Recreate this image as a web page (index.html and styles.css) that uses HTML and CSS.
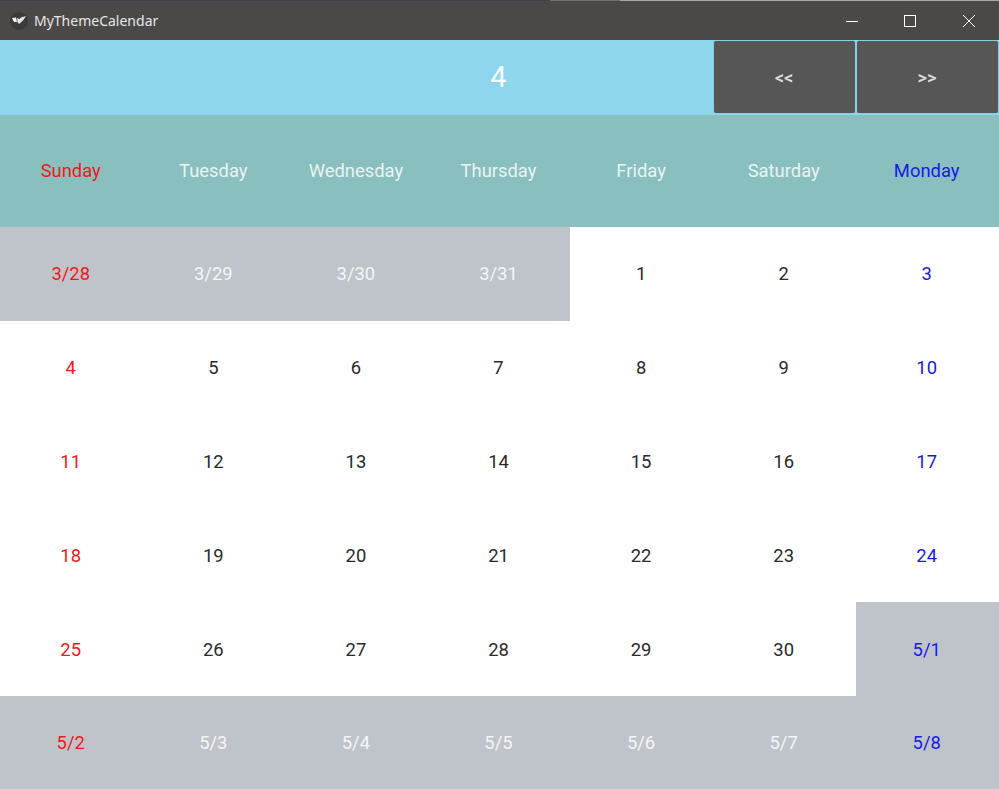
FILE: index.html

```html
<!DOCTYPE html>
<html lang="en">
<head>
    <meta charset="UTF-8">
    <meta name="viewport" content="width=device-width, initial-scale=1.0">
    <title>MyThemeCalendar</title>
    <link rel="stylesheet" href="styles.css">
</head>
<body>
    <!-- window title bar -->
    <div class="titlebar">
        <div class="app-icon">
            <svg width="14" height="9" viewBox="0 0 14 9">
                <path d="M0 2 L4 1.5 L5 6 L2 6 Z" fill="#f2f2f2"/>
                <path d="M5 2 L7.5 3 L9 1.5 L14 0 L11 4.5 L7 8 L5.5 6 Z" fill="#e4e4e4"/>
            </svg>
        </div>
        <div class="app-name">MyThemeCalendar</div>
        <div class="win-btn">
            <svg width="12" height="12" viewBox="0 0 12 12"><path d="M0 6.5H12" stroke="#fff" fill="none"/></svg>
        </div>
        <div class="win-btn">
            <svg width="12" height="12" viewBox="0 0 12 12"><rect x="0.5" y="0.5" width="11" height="11" stroke="#fff" fill="none"/></svg>
        </div>
        <div class="win-btn">
            <svg width="12" height="12" viewBox="0 0 12 12"><path d="M0 0L12 12M12 0L0 12" stroke="#fff" fill="none"/></svg>
        </div>
    </div>

    <div class="month-bar">
        <div class="month">4</div>
        <button class="nav-btn">&lt;&lt;</button>
        <button class="nav-btn">&gt;&gt;</button>
    </div>

    <div class="week">
        <div class="cell sun">Sunday</div>
        <div class="cell">Tuesday</div>
        <div class="cell">Wednesday</div>
        <div class="cell">Thursday</div>
        <div class="cell">Friday</div>
        <div class="cell">Saturday</div>
        <div class="cell mon">Monday</div>
    </div>

    <div class="days">
        <div class="cell sun other">3/28</div>
        <div class="cell other">3/29</div>
        <div class="cell other">3/30</div>
        <div class="cell other">3/31</div>
        <div class="cell">1</div>
        <div class="cell">2</div>
        <div class="cell mon">3</div>

        <div class="cell sun">4</div>
        <div class="cell">5</div>
        <div class="cell">6</div>
        <div class="cell">7</div>
        <div class="cell">8</div>
        <div class="cell">9</div>
        <div class="cell mon">10</div>

        <div class="cell sun">11</div>
        <div class="cell">12</div>
        <div class="cell">13</div>
        <div class="cell">14</div>
        <div class="cell">15</div>
        <div class="cell">16</div>
        <div class="cell mon">17</div>

        <div class="cell sun">18</div>
        <div class="cell">19</div>
        <div class="cell">20</div>
        <div class="cell">21</div>
        <div class="cell">22</div>
        <div class="cell">23</div>
        <div class="cell mon">24</div>

        <div class="cell sun">25</div>
        <div class="cell">26</div>
        <div class="cell">27</div>
        <div class="cell">28</div>
        <div class="cell">29</div>
        <div class="cell">30</div>
        <div class="cell mon other">5/1</div>

        <div class="cell sun other">5/2</div>
        <div class="cell other">5/3</div>
        <div class="cell other">5/4</div>
        <div class="cell other">5/5</div>
        <div class="cell other">5/6</div>
        <div class="cell other">5/7</div>
        <div class="cell mon other">5/8</div>
    </div>
</body>
</html>
```

FILE: styles.css

```css
html, body {
    margin: 0;
    height: 100%;
    overflow: hidden;
}

body {
    font-family: 'Roboto', sans-serif;
    background-color: #fff;
}

.titlebar {
    display: flex;
    align-items: center;
    height: 39px;
    padding-right: 1px;
    background-color: #4b4948;
    border-top: 1px solid;
    border-image: linear-gradient(90deg, #3f3f47 0, #3f3f47 550px, #6d7470 550px, #6d7470 620px, #a3a8a4 620px) 1;
}

.app-icon {
    display: flex;
    align-items: center;
    justify-content: center;
    width: 18px;
    height: 18px;
    margin-left: 10px;
    border-radius: 50%;
    background-color: #3c3b3b;
}

.app-name {
    flex: 1;
    margin-left: 6px;
    font-family: 'Noto Sans', sans-serif;
    font-size: 14px;
    color: #e6e6e6;
}

.win-btn {
    display: flex;
    align-items: center;
    justify-content: center;
    width: 58.5px;
    height: 100%;
}

.month-bar {
    display: flex;
    height: 75px;
    padding-right: 1px;
    background-color: #8dd6ee;
}

.month {
    flex: 1;
    padding-left: 283px;
    text-align: center;
    line-height: 75px;
    font-size: 29px;
    color: #fff;
}

.nav-btn {
    width: 141px;
    height: 72px;
    margin-top: 1px;
    padding: 0 1px 0 0;
    border: none;
    border-radius: 2px;
    background-color: #565656;
    box-shadow: 0 0 1px #5f8b9a;
    font-family: 'Roboto', sans-serif;
    font-size: 18.4px;
    font-weight: 500;
    color: #dcdcdc;
}

.nav-btn + .nav-btn {
    margin-left: 2px;
}

.week, .days {
    display: grid;
    grid-template-columns: repeat(6, 142.6px) 1fr;
}

.week {
    grid-auto-rows: 112px;
    background-color: #89bfbf;
    color: #eaf3f3;
}

.week .cell {
    padding-bottom: 1px;
}

.days {
    grid-auto-rows: 93.8px;
    color: #2a2a2a;
}

.cell {
    display: flex;
    align-items: center;
    justify-content: center;
    padding-right: 1.2px;
    font-size: 18.4px;
}

.other {
    background-color: #bfc4cb;
    color: #f4f5f6;
}

.sun {
    color: #f01818;
}

.mon {
    color: #1a1ae6;
}
```
